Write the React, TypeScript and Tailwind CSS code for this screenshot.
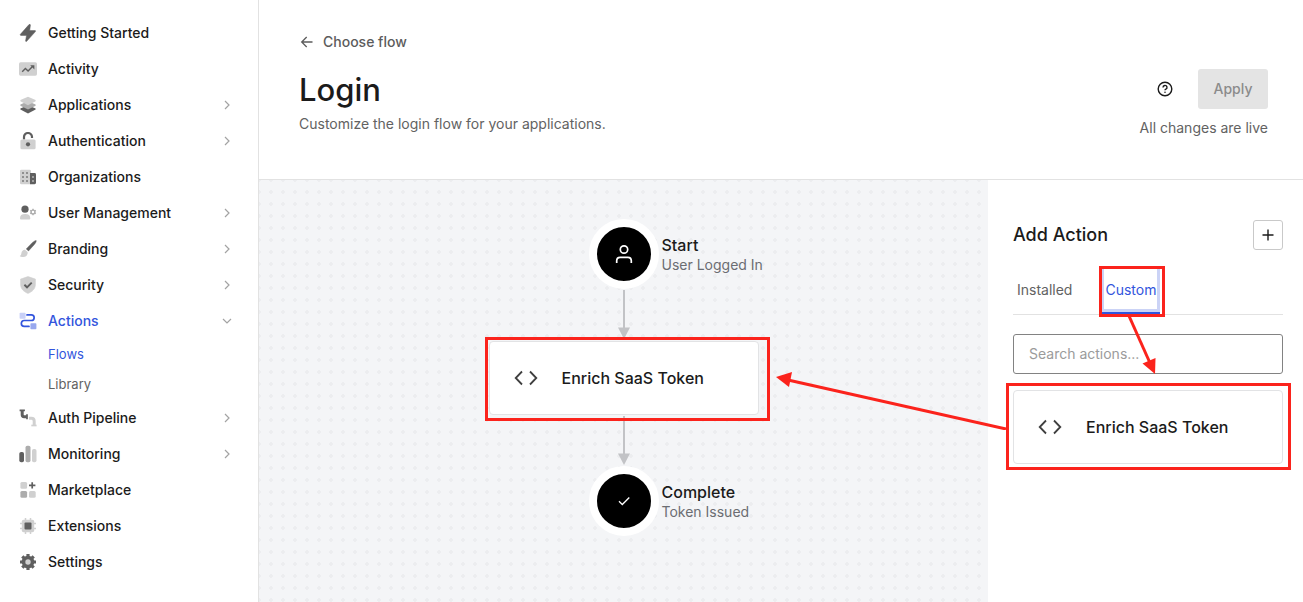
import type { ReactNode } from "react";

const DARK = "#5f5f5f";
const MID = "#adadad";
const LIGHT = "#d0d0d0";

function Icon({ children }: { children: ReactNode }) {
  return (
    <svg width="18" height="18" viewBox="0 0 18 18" fill="none" aria-hidden="true" className="shrink-0">
      {children}
    </svg>
  );
}

const icons = {
  bolt: (
    <path d="M10 .6 1.4 10.3c-.4.5-.2 1.1.5 1.1h5.6l-.9 5.4c-.1.8.6 1 1.1.5l8.7-9.7c.4-.5.2-1-.4-1h-5.300l.7-5.4c.1-.8-.8-1.2-1.4-.6Z" fill={DARK} stroke={DARK} strokeWidth=".5" />
  ),
  activity: (
    <>
      <rect y="2.3" width="18" height="13.4" rx="1.6" fill={LIGHT} />
      <path d="m3.2 11.8 3.2-3.3 2.7 2.6 4.4-4.5" stroke={DARK} strokeWidth="1.4" />
      <path d="M11.2 5.3h4.2v4.2Z" fill={DARK} />
    </>
  ),
  layers: (
    <>
      <path d="M1.4 12.4 9 9.2l7.6 3.2v1.2L9 17.5l-7.6-3.9Z" fill={DARK} />
      <path d="M1.4 8.4 9 5.2l7.6 3.2v1.3L9 13.6 1.4 9.7Z" fill={MID} />
      <path d="M9 .7 16.6 4v1.3L9 9.2 1.4 5.3V4Z" fill={LIGHT} />
    </>
  ),
  lock: (
    <>
      <path d="M5 7.600V5.200a4 4 0 0 1 8-.4V6" stroke={DARK} strokeWidth="2.200" />
      <rect x="1.400" y="7.500" width="15.200" height="9.800" rx="1.500" fill={LIGHT} />
      <circle cx="9" cy="12.300" r="2.100" fill={DARK} />
    </>
  ),
  building: (
    <>
      <rect x="1" y="1.8" width="11" height="14.4" rx="1.3" fill={LIGHT} />
      <path d="M11 5h4.600A1.400 1.400 0 0 1 17 6.400v8.400a1.400 1.400 0 0 1-1.400 1.400H11Z" fill={DARK} />
      <path d="M4 5h.01M8 5h.01M4 9h.01M8 9h.01M4 13h.01M8 13h.01" stroke={DARK} strokeWidth="1.500" strokeLinecap="square" />
      <path d="M14 9h.01M14 13h.01" stroke={LIGHT} strokeWidth="1.500" strokeLinecap="square" />
    </>
  ),
  user: (
    <>
      <circle cx="6" cy="5.200" r="3.600" fill={DARK} />
      <path d="M1 14.300c0-2.800 1.500-4.300 5.100-4.300s5.200 1.500 5.200 4.300c0 .8-.5 1.300-1.300 1.300H2.300C1.500 15.600 1 15.100 1 14.300Z" fill={LIGHT} />
      <circle cx="14" cy="8" r="1.900" stroke={MID} strokeWidth="1.300" />
      <path d="M14 4.800v1.400M14 9.800v1.400M11.200 6.400l1.200.700M15.600 8.900l1.200.700M11.200 9.600l1.200-.7M15.600 7.100l1.200-.7" stroke={MID} strokeWidth="1.400" />
    </>
  ),
  brush: (
    <>
      <path d="m7.200 8.900 6-6.200C14.800 1.300 16.700.1 17.200.5s-.6 2.600-2 4.200L9.500 11Z" fill={DARK} stroke={DARK} strokeWidth=".4" />
      <path d="M6.200 9.900 8.600 12c.5 3-1.600 4.900-4.200 5C2.900 17.100 1.500 16.800.7 16c1.400-.7 1.500-1.500 1.700-2.900.3-2.100 2-3.500 3.800-3.200Z" fill={LIGHT} />
    </>
  ),
  shield: (
    <>
      <path d="m9 .6 7.400 2.500v5.200c0 4.600-3 7.300-7.400 9.100-4.400-1.800-7.400-4.500-7.400-9.100V3.100Z" fill={LIGHT} stroke={LIGHT} strokeWidth=".6" strokeLinejoin="round" />
      <path d="m5.400 8.800 2.600 2.500 4.700-4.700" stroke={DARK} strokeWidth="1.900" />
    </>
  ),
  actions: (
    <>
      <rect x=".6" y=".7" width="6" height="6" rx=".8" fill="#c8d0f7" />
      <rect x="11.400" y="11.300" width="6" height="6" rx=".8" fill="#98a8ee" />
      <path d="M8 2.900h4.300c3.800 0 3.800 5.600 0 5.600H5.200c-3.800 0-3.800 5.900 0 5.900H10" stroke="#3355dd" strokeWidth="1.700" strokeLinecap="round" />
    </>
  ),
  pipeline: (
    <>
      <path d="M10 9.300h2.300c1.900 0 2.900.9 2.900 2.900v4.100" stroke={LIGHT} strokeWidth="3" />
      <path d="M12.300 16.500h5.300" stroke={LIGHT} strokeWidth="1.700" />
      <path d="M3.200 1.500v4.300c0 1.300.6 1.900 1.900 1.900h2.700" stroke={DARK} strokeWidth="3" />
      <path d="M.6 1.300h5.300M8 5.300v4.900" stroke={DARK} strokeWidth="1.700" />
    </>
  ),
  bars: (
    <>
      <rect x=".3" y="7" width="4.700" height="10.300" rx="1.800" fill={DARK} />
      <rect x="6.500" y=".7" width="5" height="16.600" rx="1.800" fill={MID} />
      <rect x="13" y="4" width="4.500" height="13.300" rx="1.800" fill={LIGHT} />
    </>
  ),
  market: (
    <>
      <rect x="1.400" y="1" width="6.700" height="6.700" rx="1.500" fill={LIGHT} />
      <rect x="1.400" y="10" width="6.700" height="6.700" rx="1.500" fill={MID} />
      <rect x="10" y="10" width="6.700" height="6.700" rx="1.500" fill={LIGHT} />
      <path d="M13.200 1.200v6.400M10 4.400h6.400" stroke={DARK} strokeWidth="1.700" />
    </>
  ),
  chip: (
    <>
      <path d="M6.500 1v16M11.500 1v16M1 6.500h16M1 11.500h16" stroke={LIGHT} strokeWidth="1.500" />
      <rect x="2.800" y="2.800" width="12.400" height="12.400" rx="1.800" fill={LIGHT} />
      <rect x="5.500" y="5.500" width="7" height="7" rx="1" fill={DARK} />
    </>
  ),
  gear: (
    <>
      <circle cx="9" cy="9" r="6.300" fill={DARK} />
      <path d="M9 1v16M1 9h16M3.300 3.300l11.400 11.400M14.700 3.300 3.300 14.700" stroke={DARK} strokeWidth="3.200" />
      <circle cx="9" cy="9" r="2.700" fill={LIGHT} />
    </>
  ),
};

type NavItem = { label: string; icon: keyof typeof icons; expandable?: boolean; children?: string[] };

const nav: NavItem[] = [
  { label: "Getting Started", icon: "bolt" },
  { label: "Activity", icon: "activity" },
  { label: "Applications", icon: "layers", expandable: true },
  { label: "Authentication", icon: "lock", expandable: true },
  { label: "Organizations", icon: "building" },
  { label: "User Management", icon: "user", expandable: true },
  { label: "Branding", icon: "brush", expandable: true },
  { label: "Security", icon: "shield", expandable: true },
  { label: "Actions", icon: "actions", expandable: true, children: ["Flows", "Library"] },
  { label: "Auth Pipeline", icon: "pipeline", expandable: true },
  { label: "Monitoring", icon: "bars", expandable: true },
  { label: "Marketplace", icon: "market" },
  { label: "Extensions", icon: "chip" },
  { label: "Settings", icon: "gear" },
];

function Chevron({ open }: { open: boolean }) {
  return (
    <svg width="12" height="12" viewBox="0 0 12 12" fill="none" stroke="#a3a3a3" strokeWidth="1.2" aria-hidden="true">
      <path d={open ? "m2 4 4 4 4-4" : "m4 2 4 4-4 4"} />
    </svg>
  );
}

function Sidebar() {
  return (
    <nav className="w-[259px] shrink-0 border-r border-[#e2e2e2] pt-[15px]">
      <ul>
        {nav.map((item) => (
          <li key={item.label}>
            <a
              href="#"
              className={`flex h-9 items-center gap-[11px] pr-[25px] pl-[19px] text-sm font-medium ${item.children ? "text-[#3355dd]" : "text-[#1b1b1b]"}`}
            >
              <Icon>{icons[item.icon]}</Icon>
              <span className="flex-1">{item.label}</span>
              {item.expandable && <Chevron open={!!item.children} />}
            </a>
            {item.children && (
              <ul className="pt-px text-[13px]">
                {item.children.map((child, i) => (
                  <li key={child}>
                    <a href="#" className={`flex h-[30px] items-center pl-12 ${i === 0 ? "text-[#3355dd]" : "text-[#626262]"}`}>
                      {child}
                    </a>
                  </li>
                ))}
              </ul>
            )}
          </li>
        ))}
      </ul>
    </nav>
  );
}

function Header() {
  return (
    <header className="flex h-[180px] justify-between border-b border-[#e2e2e2] pr-[35px] pl-10">
      <div className="pt-8">
        <a href="#" className="flex h-5 items-center gap-2 text-sm font-medium text-[#5c5c5c]">
          <svg width="16" height="16" viewBox="0 0 16 16" fill="none" stroke="currentColor" strokeWidth="1.3" aria-hidden="true">
            <path d="M13.500 8H3M7.700 3 2.700 8l5 5" />
          </svg>
          Choose flow
        </a>
        <h1 className="mt-[18px] text-[31px] leading-10 font-medium text-[#1b1b1b]">Login</h1>
        <p className="mt-1 text-sm leading-5 text-[#626262]">Customize the login flow for your applications.</p>
      </div>
      <div className="flex flex-col items-end pt-[69px]">
        <div className="flex items-center gap-6">
          <button type="button" aria-label="Help" className="text-[#1b1b1b]">
            <svg width="18" height="18" viewBox="0 0 18 18" fill="none" stroke="currentColor" strokeWidth="1.4" aria-hidden="true">
              <circle cx="9" cy="9" r="6.800" />
              <path d="M7 7.400a2 2 0 1 1 2.900 1.800c-.6.300-.9.600-.9 1.100" />
              <circle cx="9" cy="12.200" r=".5" fill="currentColor" strokeWidth=".5" />
            </svg>
          </button>
          <button type="button" disabled className="h-10 w-[70px] rounded-[3px] bg-[#e4e4e4] text-sm font-medium text-[#8b8b8b]">
            Apply
          </button>
        </div>
        <p className="mt-[9px] text-sm leading-5 text-[#626262]">All changes are live</p>
      </div>
    </header>
  );
}

function ActionCard() {
  return (
    <div className="flex h-[74px] w-full items-center gap-6 rounded border border-[#e2e3e5] bg-white pl-6">
      <svg width="24" height="24" viewBox="0 0 24 24" fill="none" stroke="#3f3f3f" strokeWidth="1.8" aria-hidden="true">
        <path d="M8 5.500 1.700 12 8 18.500M16 5.500l6.300 6.500-6.300 6.500" />
      </svg>
      <span className="text-base font-medium text-[#1b1b1b]">Enrich SaaS Token</span>
    </div>
  );
}

function Connector() {
  return (
    <svg width="12" height="52" viewBox="0 0 12 52" className="-mb-px" aria-hidden="true">
      <path d="M6 1v40" stroke="#c2c3c6" strokeWidth="2" />
      <path d="M0 38.500h12L6 50Z" fill="#c2c3c6" />
    </svg>
  );
}

function FlowNode({ title, subtitle, children }: { title: string; subtitle: string; children: ReactNode }) {
  return (
    <div className="grid w-full grid-cols-[1fr_auto_1fr] items-center gap-[3px]">
      <span />
      <div className="flex size-[70px] items-center justify-center rounded-full border-8 border-white bg-black">{children}</div>
      <div className="pt-0.5">
        <h2 className="text-base leading-5 font-medium text-[#1b1b1b]">{title}</h2>
        <p className="text-sm leading-5 text-[#6b6d72]">{subtitle}</p>
      </div>
    </div>
  );
}

function Canvas() {
  return (
    <section className="flex min-w-0 flex-1 flex-col items-center bg-[#f4f5f7] bg-[radial-gradient(circle,#ecedef_1.5px,transparent_2px)] bg-size-[12px_12px] bg-position-[-6px_-6px] pt-[39px] pb-16">
      <FlowNode title="Start" subtitle="User Logged In">
        <svg width="20" height="20" viewBox="0 0 20 20" fill="none" stroke="white" strokeWidth="1.7" aria-hidden="true">
          <circle cx="10" cy="5.500" r="3.700" />
          <path d="M2.700 19v-2.300c0-2 1.400-3.400 3.400-3.400h7.800c2 0 3.400 1.400 3.400 3.400V19" />
        </svg>
      </FlowNode>
      <Connector />
      <div className="relative mt-px w-[270px]">
        <ActionCard />
        <div className="pointer-events-none absolute -top-1 -right-[11px] -bottom-1.5 -left-1 border-3 border-[#fb231c]" />
      </div>
      <Connector />
      <FlowNode title="Complete" subtitle="Token Issued">
        <svg width="14" height="14" viewBox="0 0 14 14" fill="none" stroke="white" strokeWidth="1.3" aria-hidden="true">
          <path d="m2 7.300 3.300 3.200 7-7" />
        </svg>
      </FlowNode>
    </section>
  );
}

function ActionPanel() {
  return (
    <aside className="w-[315px] shrink-0 bg-white pt-10 pr-5 pl-[25px]">
      <div className="flex items-center justify-between">
        <h2 className="text-lg font-medium text-[#1b1b1b]">Add Action</h2>
        <button type="button" aria-label="Create action" className="flex size-[30px] items-center justify-center rounded-[3px] border border-[#c9c9c9] text-[#1b1b1b]">
          <svg width="12" height="12" viewBox="0 0 12 12" stroke="currentColor" strokeWidth="1.4" aria-hidden="true">
            <path d="M6 .5v11M.5 6h11" />
          </svg>
        </button>
      </div>
      <div role="tablist" className="mt-4 flex h-[49px] gap-[25px] border-b border-[#e2e2e2] text-sm">
        <button type="button" role="tab" aria-selected="false" className="px-1 text-[#626262]">
          Installed
        </button>
        <div className="relative flex">
          <button type="button" role="tab" aria-selected="true" className="border-b-2 border-[#2f54dd] px-1 pt-0.5 text-[#3355dd] inset-ring-3 inset-ring-[#cbd3f6]">
            Custom
          </button>
          <div className="pointer-events-none absolute top-0 -right-[5px] -bottom-[3px] -left-0.5 border-3 border-[#fb231c]" />
          <svg width="40" height="62" viewBox="0 0 40 62" className="pointer-events-none absolute top-[50px] left-6" aria-hidden="true">
            <path d="M4 0 25 47" stroke="#fb231c" strokeWidth="3" />
            <path d="M17.500 47.500 30.500 42 30 58Z" fill="#fb231c" />
          </svg>
        </div>
      </div>
      <input
        type="text"
        aria-label="Search actions"
        placeholder="Search actions..."
        className="mt-[19px] block h-10 w-full rounded-[3px] border border-[#828282] px-[15px] pb-0.5 text-sm placeholder:text-[#9b9b9b]"
      />
      <div className="relative mt-4">
        <ActionCard />
        <div className="pointer-events-none absolute -top-[7px] -right-2 -bottom-1.5 -left-[7px] border-3 border-[#fb231c]" />
        <svg width="232" height="60" viewBox="0 0 232 60" className="pointer-events-none absolute -top-5 -left-[238px]" aria-hidden="true">
          <path d="M13 10 231 59" stroke="#fb231c" strokeWidth="3" />
          <path d="M1 7 17 2 14 17Z" fill="#fb231c" />
        </svg>
      </div>
    </aside>
  );
}

export default function App() {
  return (
    <div className="flex min-h-screen bg-white font-['Inter',sans-serif]">
      <Sidebar />
      <div className="flex min-w-0 flex-1 flex-col">
        <Header />
        <main className="flex flex-1">
          <Canvas />
          <ActionPanel />
        </main>
      </div>
    </div>
  );
}
